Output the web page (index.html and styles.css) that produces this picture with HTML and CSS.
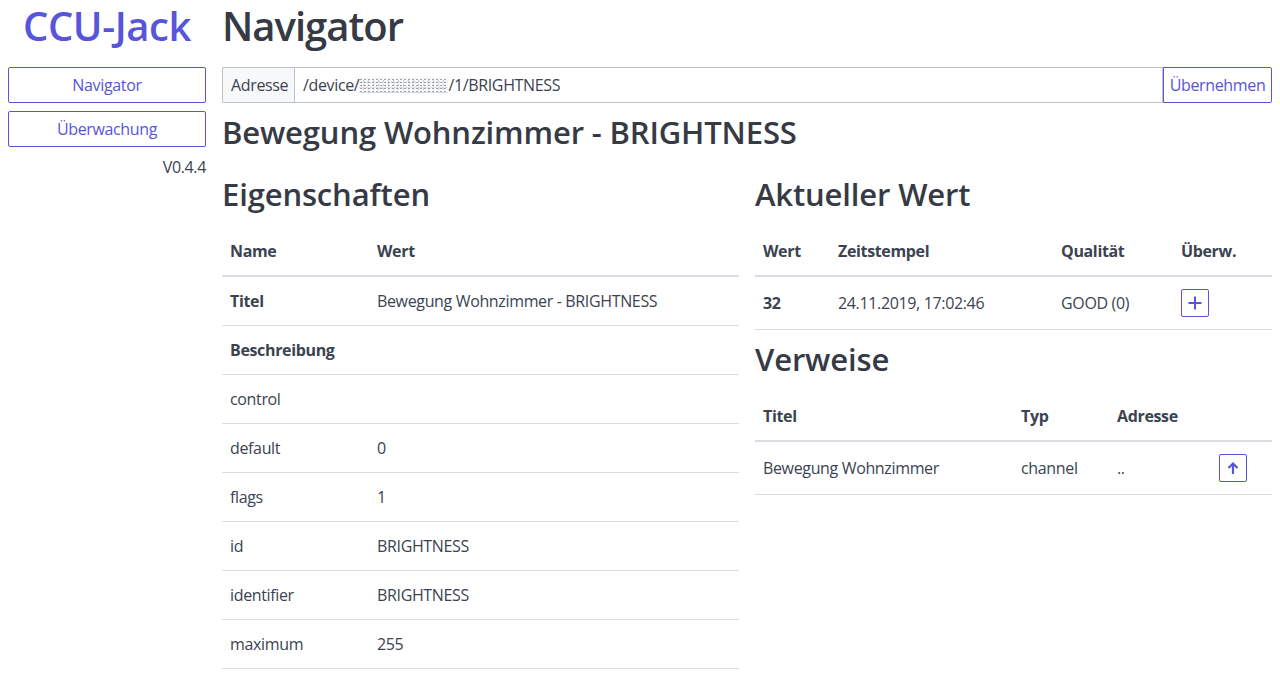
FILE: index.html
```html
<!DOCTYPE html>
<html lang="de">
<head>
<meta charset="utf-8">
<title>CCU-Jack</title>
<link rel="stylesheet" href="styles.css">
</head>
<body>
<div class="app">
  <aside class="sidebar">
    <h1 class="logo">CCU-Jack</h1>
    <nav class="nav">
      <a class="btn btn-block" href="#">Navigator</a>
      <a class="btn btn-block" href="#">Überwachung</a>
    </nav>
    <div class="version">V0.4.4</div>
  </aside>
  <main class="main">
    <h1 class="page-title">Navigator</h1>
    <div class="input-group">
      <span class="input-group-addon">Adresse</span>
      <div class="form-input">/device/<span class="blur"></span>/1/BRIGHTNESS</div>
      <button class="btn input-group-btn">Übernehmen</button>
    </div>
    <h2 class="title">Bewegung Wohnzimmer - BRIGHTNESS</h2>
    <div class="columns">
      <section class="column">
        <h2 class="section-title">Eigenschaften</h2>
        <table class="table">
          <colgroup><col class="w-name"><col></colgroup>
          <thead><tr><th>Name</th><th>Wert</th></tr></thead>
          <tbody>
            <tr><td class="strong">Titel</td><td>Bewegung Wohnzimmer - BRIGHTNESS</td></tr>
            <tr><td class="strong">Beschreibung</td><td></td></tr>
            <tr><td>control</td><td></td></tr>
            <tr><td>default</td><td>0</td></tr>
            <tr><td>flags</td><td>1</td></tr>
            <tr><td>id</td><td>BRIGHTNESS</td></tr>
            <tr><td>identifier</td><td>BRIGHTNESS</td></tr>
            <tr><td>maximum</td><td>255</td></tr>
          </tbody>
        </table>
      </section>
      <section class="column">
        <h2 class="section-title">Aktueller Wert</h2>
        <table class="table">
          <colgroup><col class="w-wert"><col class="w-zeit"><col class="w-qual"><col></colgroup>
          <thead><tr><th>Wert</th><th>Zeitstempel</th><th>Qualität</th><th>Überw.</th></tr></thead>
          <tbody>
            <tr class="btn-row">
              <td class="strong">32</td>
              <td>24.11.2019, 17:02:46</td>
              <td>GOOD (0)</td>
              <td><button class="btn btn-sm btn-icon" aria-label="Überwachen">
                <svg width="16" height="16" viewBox="0 0 16 16"><path d="M8 1.5v13M1.5 8h13" stroke="currentColor" stroke-width="2" fill="none"/></svg>
              </button></td>
            </tr>
          </tbody>
        </table>
        <h2 class="section-title second">Verweise</h2>
        <table class="table">
          <colgroup><col class="w-titel"><col class="w-typ"><col class="w-adr"><col></colgroup>
          <thead><tr><th>Titel</th><th>Typ</th><th>Adresse</th><th></th></tr></thead>
          <tbody>
            <tr class="btn-row">
              <td>Bewegung Wohnzimmer</td>
              <td>channel</td>
              <td>..</td>
              <td><button class="btn btn-sm btn-icon" aria-label="Nach oben">
                <svg width="16" height="16" viewBox="0 0 16 16"><path d="M8 14V3.5M3.5 8L8 3.5 12.5 8" stroke="currentColor" stroke-width="2.2" fill="none" stroke-linecap="butt" stroke-linejoin="miter"/></svg>
              </button></td>
            </tr>
          </tbody>
        </table>
      </section>
    </div>
  </main>
</div>
</body>
</html>
```

FILE: styles.css
```css
* { box-sizing: border-box; }

html, body {
  margin: 0;
  padding: 0;
  background: #fff;
}

body {
  font-family: "Open Sans", "Noto Sans", sans-serif;
  font-size: 16px;
  line-height: 24px;
  letter-spacing: -0.35px;
  color: #3b4351;
}

.app {
  display: grid;
  grid-template-columns: 198px 1fr;
  column-gap: 16px;
  padding: 0 8px;
}

h1, h2 {
  font-weight: 600;
  color: #363a45;
  margin: 0;
}

.logo {
  color: #5755d9;
  font-size: 40px;
  line-height: 52px;
  margin: 0 0 15px;
  text-align: center;
  letter-spacing: -0.4px;
}

.page-title {
  font-size: 40px;
  line-height: 52px;
  margin: 0 0 15px;
  letter-spacing: -1px;
}

.nav {
  display: flex;
  flex-direction: column;
  gap: 8px;
}

.btn {
  display: inline-flex;
  align-items: center;
  justify-content: center;
  height: 36px;
  padding: 0 8px;
  border: 1px solid #5755d9;
  border-radius: 2px;
  background: #fff;
  color: #5755d9;
  font: inherit;
  letter-spacing: inherit;
  text-decoration: none;
  cursor: pointer;
}

.btn-block { width: 100%; }

.version {
  text-align: right;
  margin-top: 8px;
}

.input-group {
  display: flex;
  height: 36px;
}

.input-group-addon {
  display: flex;
  align-items: center;
  width: 72px;
  padding: 0 8px;
  background: #f7f8f9;
  border: 1px solid #bcc3ce;
  border-right: 0;
  border-radius: 2px 0 0 2px;
}

.form-input {
  flex: 1;
  display: flex;
  align-items: center;
  padding: 0 8px;
  border: 1px solid #bcc3ce;
  white-space: pre;
}

.blur {
  display: inline-block;
  width: 89px;
  height: 15px;
  background-image:
    radial-gradient(circle, #9ea2ab 0.7px, transparent 1.1px),
    radial-gradient(circle, #c9ccd2 0.8px, transparent 1.2px),
    radial-gradient(circle, #e0e2e6 1px, transparent 1.4px);
  background-size: 4px 3px, 5px 4px, 3px 5px;
  background-position: 0 0, 2px 1px, 1px 2px;
}

.input-group-btn {
  width: 109px;
  border-radius: 0 2px 2px 0;
}

.title {
  font-size: 31px;
  line-height: 38px;
  margin: 10px 0 24px;
  letter-spacing: -0.15px;
}

.columns {
  display: grid;
  grid-template-columns: 1fr 1fr;
  column-gap: 16px;
}

.section-title {
  font-size: 31px;
  line-height: 38px;
  margin: 0 0 14px;
  letter-spacing: -0.15px;
}

.section-title.second { margin-top: 10px; }

.table {
  width: 100%;
  border-collapse: collapse;
  table-layout: fixed;
}

.table th,
.table td {
  padding: 12px 8px;
  text-align: left;
  border-bottom: 1px solid #dadee4;
  vertical-align: middle;
}

.table th {
  font-weight: 700;
  border-bottom-width: 2px;
}

.strong { font-weight: 700; }

.w-name { width: 147px; }
.w-wert { width: 75px; }
.w-zeit { width: 223px; }
.w-qual { width: 120px; }
.w-titel { width: 258px; }
.w-typ { width: 96px; }
.w-adr { width: 102px; }

.btn-sm {
  width: 28px;
  height: 28px;
  padding: 0;
}

.btn-icon svg { display: block; }
```
